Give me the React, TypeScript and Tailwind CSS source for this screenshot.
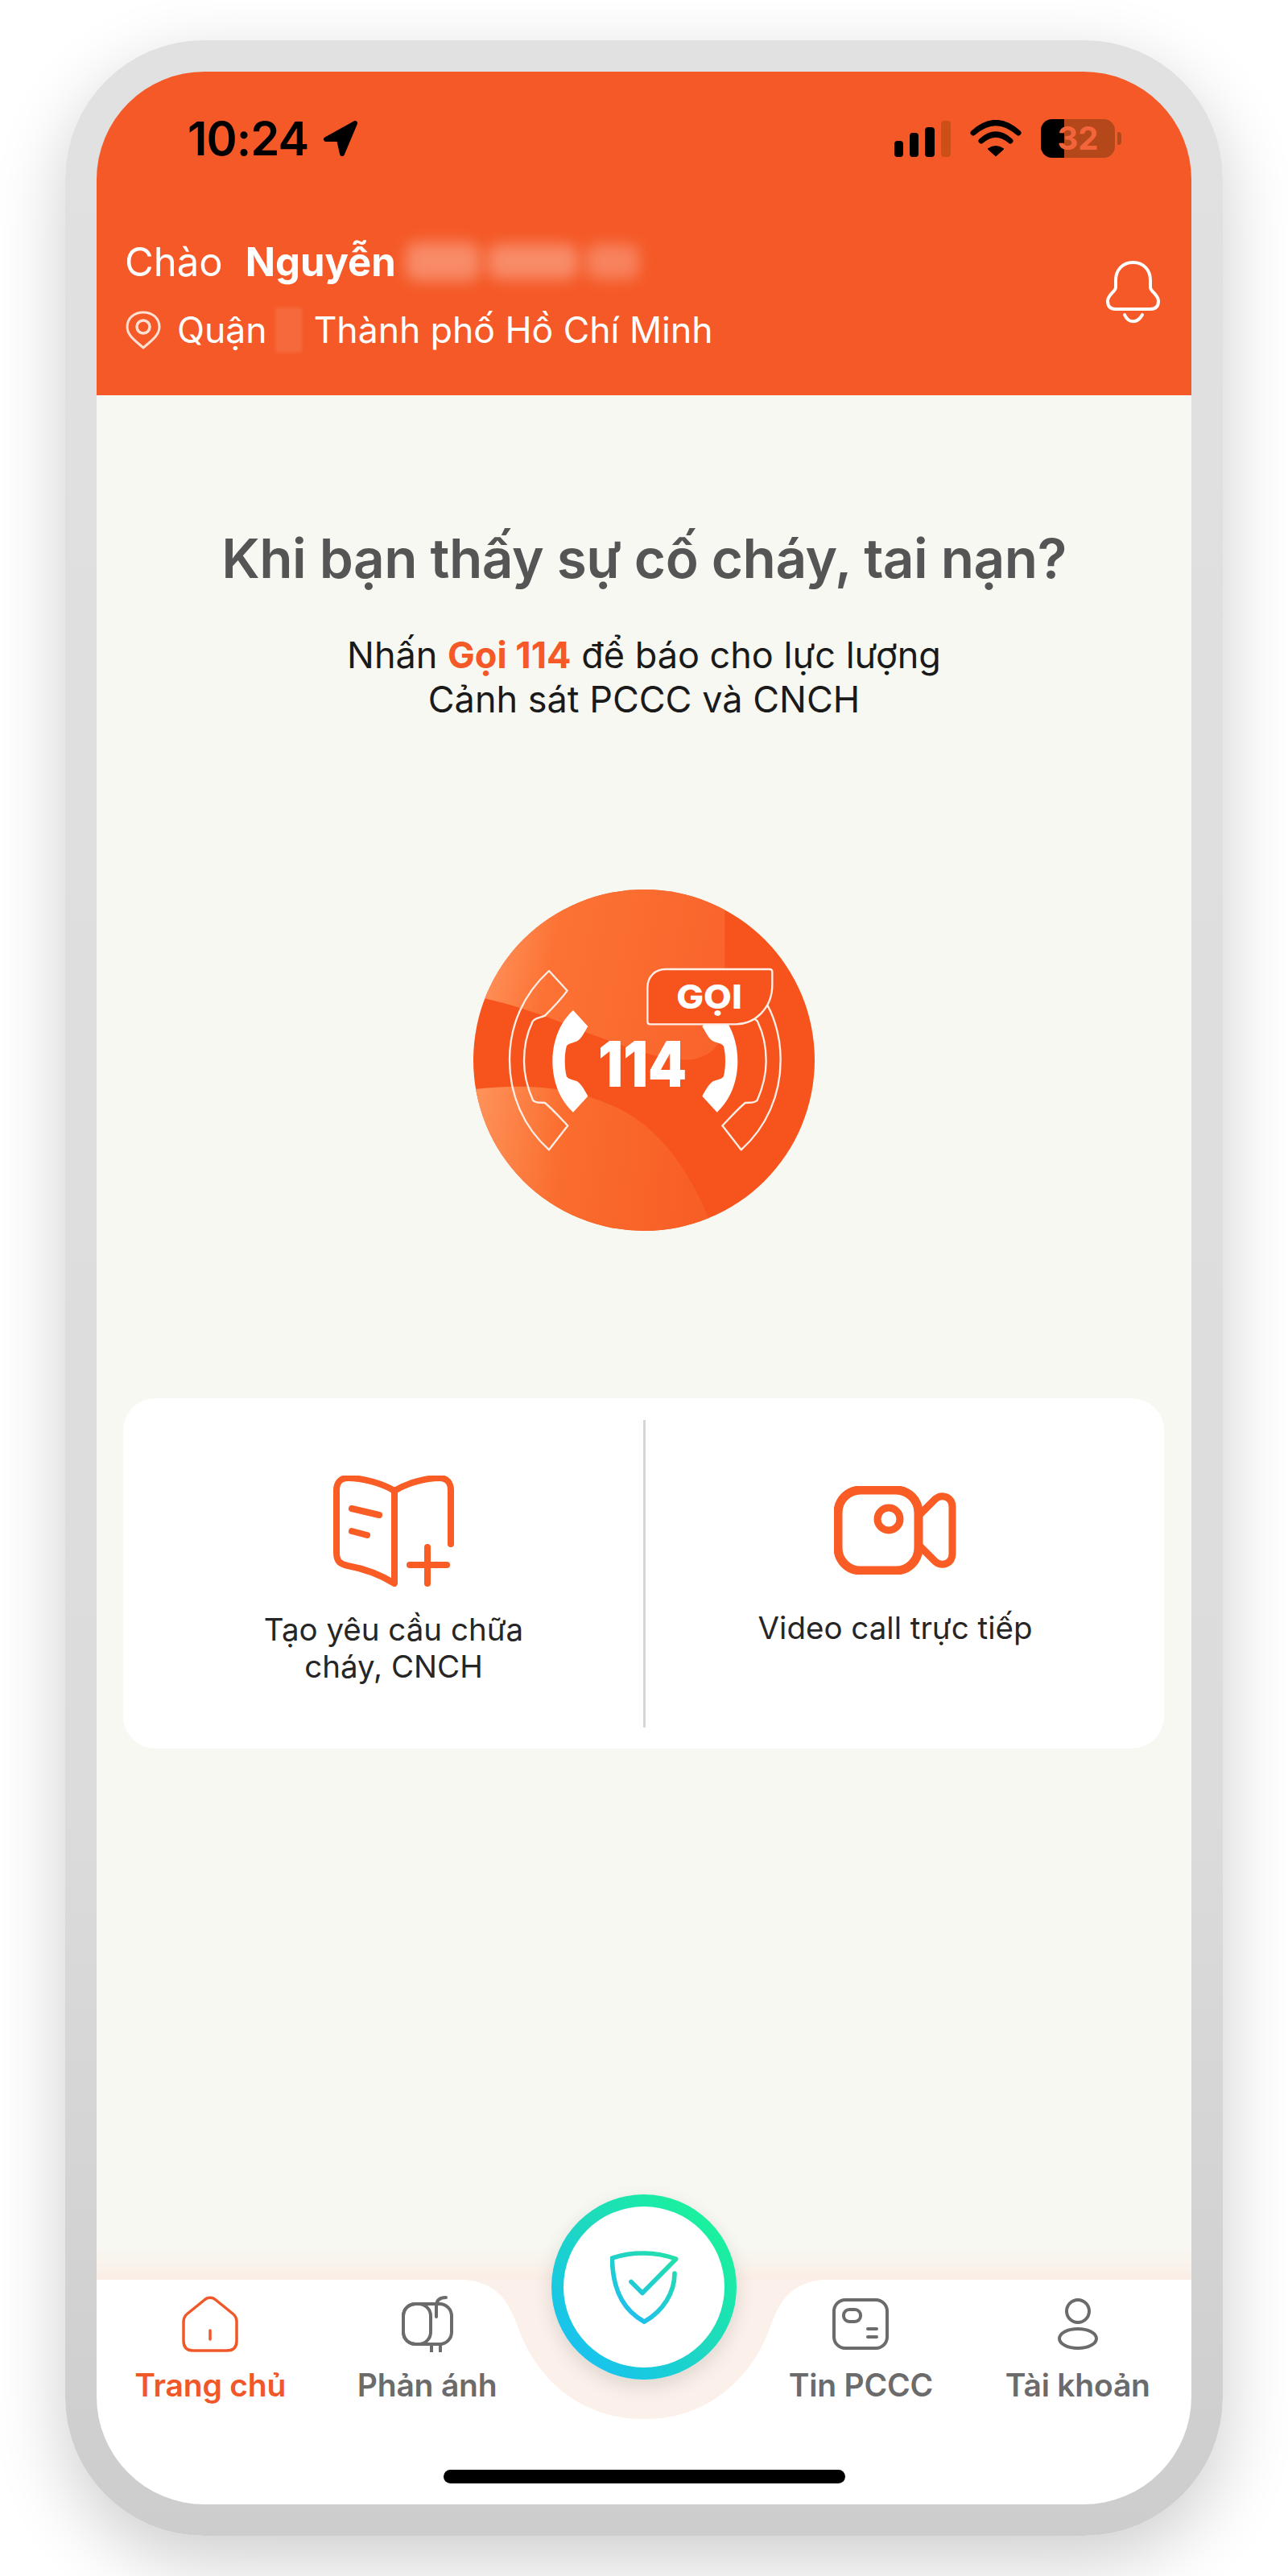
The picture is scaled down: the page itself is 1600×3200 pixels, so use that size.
import React from 'react';

const FONT = "font-['Inter','Noto_Sans',sans-serif]";

const Signal = () => (
  <div className="flex items-end gap-[8px] h-[45px]">
    <div className="w-[11px] h-[20px] rounded-[4px] bg-black" />
    <div className="w-[11px] h-[30px] rounded-[4px] bg-black" />
    <div className="w-[12px] h-[37px] rounded-[4px] bg-black" />
    <div className="w-[12px] h-[45px] rounded-[4px] bg-[#cc4f18]" />
  </div>
);

const Wifi = () => (
  <svg width="64" height="46" viewBox="0 0 64 46" fill="none">
    <path d="M4 16Q32 -9 60 16" stroke="#000" strokeWidth="7" strokeLinecap="round" />
    <path d="M14 26Q32 10 50 26" stroke="#000" strokeWidth="7" strokeLinecap="round" />
    <path d="M22 36L32 45L42 36Q32 29 22 36Z" fill="#000" stroke="#000" strokeWidth="1" strokeLinejoin="round" />
  </svg>
);

const Battery = () => (
  <div className="flex items-center">
    <div className="w-[92px] h-[48px] rounded-[14px] bg-[linear-gradient(to_right,#000_31%,#b5481b_31%)] flex items-center justify-center text-[40px] font-bold text-[#f4643a] leading-none">
      32
    </div>
    <div className="w-[5px] h-[16px] ml-[3px] rounded-r-[4px] bg-[#b5481b]" />
  </div>
);

const LocationArrow = () => (
  <svg width="44" height="45" viewBox="0 0 44 45">
    <path d="M40 3L4 23H20L24 41Z" fill="#000" stroke="#000" strokeWidth="6" strokeLinejoin="round" />
  </svg>
);

const Pin = () => (
  <svg width="46" height="48" viewBox="0 0 46 48" fill="none" stroke="#ffe0d2" strokeWidth="3">
    <path d="M23 46C14 38 3 31 3 20C3 9 12 2 23 2C34 2 43 9 43 20C43 31 32 38 23 46Z" />
    <ellipse cx="23" cy="20" rx="8" ry="8" strokeWidth="3.5" />
  </svg>
);

const Bell = () => (
  <svg width="68" height="80" viewBox="0 0 68 80" fill="none" stroke="#fff" strokeWidth="4" strokeLinecap="round">
    <path d="M33.5 2C20 2 12 12 12 24V33C12 38 2 42 2 50C2 57 6 60 12 60H55C61 60 65 57 65 50C65 42 55 38 55 33V24C55 12 47 2 33.5 2Z" />
    <path d="M23 67C28 78 39 78 45 67" />
  </svg>
);

// coordinates follow a 3x drawing of the badge
const CallBadge = () => {
  const handset =
    'M455 525L510 585C495 610 485 632 470 640C450 648 435 650 430 660C422 690 422 740 430 770C435 782 452 782 470 790C485 800 497 822 510 845L455 905C405 860 378 790 378 715C378 640 405 570 455 525Z';
  const outline =
    'M365 378L433 452C420 470 385 510 350 545C335 552 315 552 305 565C282 610 272 660 272 715C272 770 285 815 305 860C315 872 335 868 350 870C385 900 415 935 435 955L365 1045C270 960 218 840 218 710C218 580 270 465 365 378Z';
  return (
    <svg width="424" height="424" viewBox="83 75 1272 1272">
      <defs>
        <clipPath id="disc">
          <circle cx="719" cy="711" r="636" />
        </clipPath>
        <linearGradient id="topLight" x1="100" y1="300" x2="1000" y2="500" gradientUnits="userSpaceOnUse">
          <stop offset="0" stopColor="#ff9660" />
          <stop offset="0.3" stopColor="#fc7234" />
          <stop offset="1" stopColor="#f9642c" />
        </linearGradient>
        <linearGradient id="bottomLight" x1="90" y1="1000" x2="900" y2="1100" gradientUnits="userSpaceOnUse">
          <stop offset="0" stopColor="#fe9158" />
          <stop offset="0.4" stopColor="#fa6d2e" />
          <stop offset="1" stopColor="#f85f26" />
        </linearGradient>
      </defs>
      <g clipPath="url(#disc)">
        <rect x="83" y="75" width="1272" height="1272" fill="#f6541c" />
        <path d="M60 470C200 490 340 540 510 610C650 660 800 720 900 708C990 690 1020 640 1020 520V60H60Z" fill="url(#topLight)" />
        <path d="M60 822C250 800 420 800 600 880C760 950 880 1090 985 1360H60Z" fill="url(#bottomLight)" />
      </g>
      <path d={handset} fill="#fff" />
      <path d={handset} fill="#fff" transform="matrix(-1 0 0 1 1446 0)" />
      <path d={outline} fill="none" stroke="#ffeee6" strokeWidth="7" strokeLinejoin="round" />
      <path d={outline} fill="none" stroke="#ffeee6" strokeWidth="7" strokeLinejoin="round" transform="matrix(-1 0 0 1 1446 0)" />
      <path
        d="M800 372H1187Q1197 372 1197 382V430C1197 520 1130 577 1060 577H742Q732 577 732 567V440C732 400 760 372 800 372Z"
        fill="#f6541c"
        stroke="#ffeee6"
        strokeWidth="7"
      />
      <text x="962" y="520" textAnchor="middle" fontFamily="Inter" fontWeight="800" fontSize="124" fill="#fff" textLength="245" lengthAdjust="spacingAndGlyphs">
        GỌI
      </text>
      <text x="713" y="810" textAnchor="middle" fontFamily="Inter" fontWeight="900" fontSize="234" fill="#fff" textLength="330" lengthAdjust="spacingAndGlyphs">
        114
      </text>
    </svg>
  );
};

const BookPlus = () => (
  <svg width="150" height="138" viewBox="0 0 150 138" fill="none" stroke="#f95c24" strokeWidth="8" strokeLinecap="round" strokeLinejoin="round">
    <path d="M76 19C60 9 35 3 18 3C9 3 4 9 4 18V96C4 107 9 110 18 112C40 116 60 124 76 134Z" />
    <path d="M76 19C92 9 115 3 132 3C141 3 146 9 146 18V85" />
    <path d="M23 41L57 49M23 69L42 74M117 89V134M95 111H141" />
  </svg>
);

const VideoCam = () => (
  <svg width="152" height="110" viewBox="0 0 152 110" fill="none" stroke="#f95c24" strokeWidth="11" strokeLinejoin="round">
    <rect x="5" y="5" width="100" height="100" rx="28" />
    <circle cx="68" cy="41" r="14" strokeWidth="9" />
    <path d="M106 36L126 16C135 9 147 14 147 26V84C147 96 135 101 126 94L106 74" strokeWidth="9" />
  </svg>
);

const HomeIcon = () => (
  <svg width="70" height="70" viewBox="0 0 70 70" fill="none" stroke="#f0582a" strokeWidth="3.5" strokeLinecap="round">
    <path d="M28 5A10 10 0 0 1 42 5L63 22Q68 26 68 32V56Q68 68 56 68H14Q2 68 2 56V32Q2 26 7 22Z" />
    <path d="M35 43V54" />
  </svg>
);

const MailboxIcon = () => (
  <svg width="64" height="70" viewBox="0 0 64 70" fill="none" stroke="#6b6b6b" strokeWidth="4" strokeLinecap="round">
    <rect x="2" y="10" width="60" height="50" rx="15" />
    <rect x="2" y="10" width="34" height="50" rx="15" />
    <path d="M43 26V13C43 6 47 2 55 2M37 60V69M48 60V69" />
  </svg>
);

const NewsIcon = () => (
  <svg width="70" height="64" viewBox="0 0 70 64" fill="none" stroke="#6b6b6b" strokeWidth="4" strokeLinecap="round">
    <rect x="2" y="2" width="66" height="60" rx="14" />
    <rect x="14" y="14" width="21" height="15" rx="7" />
    <path d="M44 38H55M44 48H55" />
  </svg>
);

const UserIcon = () => (
  <svg width="52" height="64" viewBox="0 0 52 64" fill="none" stroke="#6b6b6b" strokeWidth="4">
    <ellipse cx="26" cy="16" rx="14" ry="14" />
    <ellipse cx="26" cy="50" rx="23" ry="12" />
  </svg>
);

const ShieldCheck = () => (
  <svg width="85" height="92" viewBox="300 285 255 275" fill="none" strokeWidth="17" strokeLinecap="round" strokeLinejoin="round">
    <defs>
      <linearGradient id="shieldStroke" x1="520" y1="290" x2="340" y2="550" gradientUnits="userSpaceOnUse">
        <stop offset="0" stopColor="#24e0a8" />
        <stop offset="1" stopColor="#1fbcf5" />
      </linearGradient>
    </defs>
    <path
      d="M540 372C540 440 500 510 427 552C360 515 310 450 307 315C380 290 470 290 545 318L420 445L378 403"
      stroke="url(#shieldStroke)"
    />
  </svg>
);

const tabs = [
  { label: 'Trang chủ', icon: <HomeIcon />, active: true },
  { label: 'Phản ánh', icon: <MailboxIcon /> },
  null,
  { label: 'Tin PCCC', icon: <NewsIcon /> },
  { label: 'Tài khoản', icon: <UserIcon /> },
];

const App: React.FC = () => {
  return (
    <div className={`w-[1600px] h-[3200px] bg-white pt-[50px] overflow-hidden ${FONT}`}>
      <div className="mx-auto w-[1438px] h-[3100px] p-[39px] rounded-[172px] bg-[linear-gradient(to_bottom,#e1e1e1,#dcdcdc_70%,#cdcdcd)] shadow-[0_30px_90px_rgba(0,0,0,0.2)]">
        <div className="relative w-[1360px] h-[3022px] rounded-[134px] overflow-hidden flex flex-col">
          {/* orange header */}
          <header className="h-[402px] shrink-0 bg-[#f55927] pt-[60px]">
            <div className="flex items-center justify-between pl-[113px] pr-[87px] h-[46px]">
              <div className="flex items-center gap-[18px]">
                <span className="text-[58px] leading-none font-semibold text-black tracking-[-1px]">10:24</span>
                <LocationArrow />
              </div>
              <div className="flex items-center gap-[24px]">
                <Signal />
                <Wifi />
                <Battery />
              </div>
            </div>
            <div className="flex items-center justify-between mt-[94px] pl-[35px] pr-[38px]">
              <div className="flex flex-col gap-[21px]">
                <div className="flex items-center h-[72px] text-white text-[49px] leading-none">
                  <span className="font-normal">Chào</span>
                  <span className="font-bold ml-[28px]">Nguyễn</span>
                  <div className="flex items-center gap-[10px] ml-[12px]">
                    <div className="w-[92px] h-[48px] rounded-[14px] bg-white/30 blur-[9px]" />
                    <div className="w-[112px] h-[44px] rounded-[14px] bg-white/30 blur-[9px]" />
                    <div className="w-[66px] h-[44px] rounded-[14px] bg-white/25 blur-[9px]" />
                  </div>
                </div>
                <div className="flex items-center text-[#fff] text-[44.5px] leading-none">
                  <Pin />
                  <span className="ml-[19px]">Quận</span>
                  <div className="w-[33px] h-[56px] ml-[10px] bg-white/10 blur-[2px]" />
                  <span className="ml-[15px]">Thành phố Hồ Chí Minh</span>
                </div>
              </div>
              <Bell />
            </div>
          </header>

          {/* main content */}
          <main className="flex-1 flex flex-col items-center bg-[linear-gradient(to_bottom,#f8f8f3_calc(100%-44px),#faeee6_100%)]">
            <h1 className="mt-[165px] text-[67.5px] leading-[76px] font-semibold text-[#555555] tracking-[-0.5px]">
              Khi bạn thấy sự cố cháy, tai nạn?
            </h1>
            <p className="mt-[54px] text-center text-[45px] leading-[55px] text-[#1a1a1a]">
              Nhấn <span className="font-bold text-[#f55927]">Gọi 114</span> để báo cho lực lượng
              <br />
              Cảnh sát PCCC và CNCH
            </p>
            <div className="mt-[209px]">
              <CallBadge />
            </div>
            <div className="mt-[208px] w-[1293px] h-[435px] ml-[-1px] bg-white rounded-[40px] flex items-center">
              <div className="flex-1 h-full flex flex-col items-center pt-[96px] pl-[26px]">
                <BookPlus />
                <p className="mt-[30px] text-center text-[38.5px] leading-[46px] text-[#262626]">
                  Tạo yêu cầu chữa
                  <br />
                  cháy, CNCH
                </p>
              </div>
              <div className="w-[3px] h-[382px] bg-[#d6d6d6]" />
              <div className="flex-1 h-full flex flex-col items-center pt-[109px] pr-[24px]">
                <VideoCam />
                <p className="mt-[43px] text-center text-[38.5px] leading-[46px] text-[#262626]">Video call trực tiếp</p>
              </div>
            </div>
          </main>

          {/* bottom tabs */}
          <nav className="relative h-[279px] shrink-0 bg-white">
            {/* notch behind the centre button */}
            <svg className="absolute left-[440px] top-0" width="480" height="175" viewBox="0 0 480 175">
              <path
                d="M0 0H18C60 4 72 30 82 55C100 110 150 173 240 173C330 173 380 110 398 55C408 30 420 4 462 0H480V-10H0Z"
                fill="#fbf1ea"
              />
            </svg>
            <div className="relative grid grid-cols-5 px-[6.5px]">
              {tabs.map((tab, i) =>
                tab ? (
                  <div key={i} className="flex flex-col items-center">
                    <div className="h-[70px] mt-[20px] flex items-center justify-center">{tab.icon}</div>
                    <span
                      className={`mt-[19px] text-[39px] leading-[44px] font-semibold tracking-[-0.2px] ${
                        tab.active ? 'text-[#f0582a]' : 'text-[#6b6b6b]'
                      }`}
                    >
                      {tab.label}
                    </span>
                  </div>
                ) : (
                  <div key={i} />
                )
              )}
            </div>
            <div className="absolute left-[431px] top-[236px] w-[499px] h-[17px] rounded-full bg-black" />
            {/* centre shield button */}
            <div className="absolute left-[565px] top-[-106px] w-[230px] h-[230px] rounded-full p-[15px] bg-gradient-to-bl from-[#1cfb8a] via-[#1fd8c0] to-[#1fb8ff] shadow-[0_8px_24px_rgba(0,0,0,0.12)]">
              <div className="w-full h-full rounded-full bg-white flex items-center justify-center">
                <ShieldCheck />
              </div>
            </div>
          </nav>
        </div>
      </div>
    </div>
  );
};

export default App;
